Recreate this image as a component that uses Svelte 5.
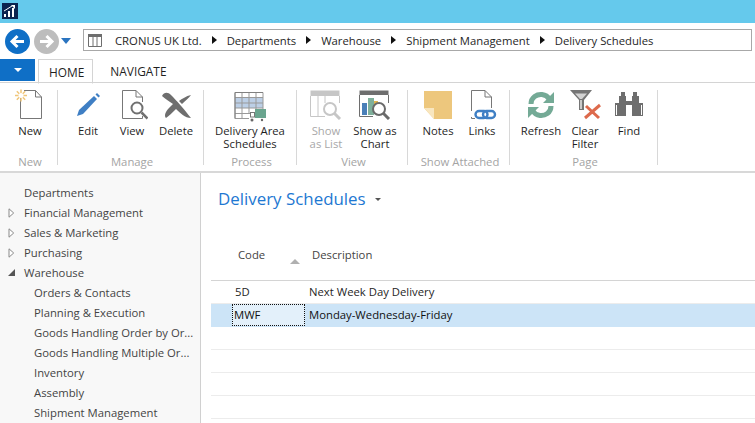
<script lang="ts">
	const crumbs = ['CRONUS UK Ltd.', 'Departments', 'Warehouse', 'Shipment Management', 'Delivery Schedules'];

	const groups = [
		{ label: 'New', width: 58, pad: 12, items: [{ id: 'new', text: 'New', w: 36 }] },
		{
			label: 'Manage',
			width: 146,
			pad: 8,
			items: [
				{ id: 'edit', text: 'Edit', w: 44 },
				{ id: 'view', text: 'View', w: 44 },
				{ id: 'delete', text: 'Delete', w: 44 }
			]
		},
		{ label: 'Process', width: 93, pad: 4, items: [{ id: 'area', text: 'Delivery Area\nSchedules', w: 84 }] },
		{
			label: 'View',
			width: 111,
			pad: 8,
			items: [
				{ id: 'list', text: 'Show\nas List', w: 42, off: true },
				{ id: 'chart', text: 'Show as\nChart', w: 56 }
			]
		},
		{
			label: 'Show Attached',
			width: 102,
			pad: 8,
			items: [
				{ id: 'notes', text: 'Notes', w: 44 },
				{ id: 'links', text: 'Links', w: 44 }
			]
		},
		{
			label: 'Page',
			width: 148,
			pad: 9,
			items: [
				{ id: 'refresh', text: 'Refresh', w: 44 },
				{ id: 'clear', text: 'Clear\nFilter', w: 44 },
				{ id: 'find', text: 'Find', w: 44 }
			]
		}
	];

	const nav = [
		{ text: 'Departments', level: 0 },
		{ text: 'Financial Management', level: 0, arrow: 'closed' },
		{ text: 'Sales & Marketing', level: 0, arrow: 'closed' },
		{ text: 'Purchasing', level: 0, arrow: 'closed' },
		{ text: 'Warehouse', level: 0, arrow: 'open' },
		{ text: 'Orders & Contacts', level: 1 },
		{ text: 'Planning & Execution', level: 1 },
		{ text: 'Goods Handling Order by Or...', level: 1 },
		{ text: 'Goods Handling Multiple Or...', level: 1 },
		{ text: 'Inventory', level: 1 },
		{ text: 'Assembly', level: 1 },
		{ text: 'Shipment Management', level: 1 }
	];
</script>

<div class="window">
	<div class="titlebar">
		<svg class="app-icon" width="16" height="16" viewBox="0 0 16 16">
			<rect width="16" height="16" fill="#0b2350" />
			<path d="M2 14v-3h2v3zM6 14V8h2v6zM10 14V5h2v9z" fill="#fff" />
			<path d="M2 8 L10 3" stroke="#fff" stroke-width="1" fill="none" />
			<path d="M9 2h4v4z" fill="#fff" />
		</svg>
	</div>

	<div class="addressrow">
		<span class="nav-btn back">
			<svg width="25" height="25" viewBox="0 0 25 25">
				<circle cx="12.5" cy="12.5" r="12.5" fill="#0f6fc6" />
				<path d="M19 12.5H8M12.500 7l-5.500 5.500 5.500 5.500" stroke="#fff" stroke-width="3" fill="none" />
			</svg>
		</span>
		<span class="nav-btn">
			<svg width="25" height="25" viewBox="0 0 25 25">
				<circle cx="12.500" cy="12.500" r="12.500" fill="#bdbdbd" />
				<path d="M6 12.500H17M12.500 7l5.500 5.500-5.500 5.500" stroke="#fff" stroke-width="3" fill="none" />
			</svg>
		</span>
		<span class="history-caret"></span>
		<div class="address">
			<svg class="grid-icon" width="14" height="13" viewBox="0 0 14 13">
				<path d="M.5 .5h13v12H.5zM5 .5v12M9 .5v12" stroke="#6e6e6e" fill="none" />
				<path d="M0 0h14v3H0z" fill="#6e6e6e" />
			</svg>
			{#each crumbs as crumb, i}
				{#if i > 0}<span class="crumb-sep"></span>{/if}
				<span class="crumb">{crumb}</span>
			{/each}
		</div>
	</div>

	<div class="tabrow">
		<span class="app-menu"><span class="app-menu-caret"></span></span>
		<span class="tab active">HOME</span>
		<span class="tab">NAVIGATE</span>
	</div>

	<div class="ribbon">
		{#each groups as group}
			<section class="group" style="width: {group.width}px; padding-left: {group.pad}px">
				<div class="items">
					{#each group.items as item}
						<div class="item" class:off={item.off} style="width: {item.w}px">
							<div class="icon">
								{#if item.id === 'new'}
									<svg width="32" height="32" viewBox="0 0 32 32">
										<path d="M6.500 9V30.500H27.500V9L21.500 2.500H10" fill="#fff" stroke="#777" />
										<path d="M21.500 2.500V9H27.500" fill="none" stroke="#777" />
										<path d="M1 7.500H13M7 1.500V13.500M2.800 3.300 11.200 11.700M11.200 3.300 2.800 11.700" stroke="#f0c67a" stroke-width="1.500" />
										<circle cx="7" cy="7.500" r="2.500" fill="#fff" />
									</svg>
								{:else if item.id === 'edit'}
									<svg width="32" height="32" viewBox="0 0 32 32">
										<path d="M22 8 25 11 11 26 5 28 7 22z" fill="#3f7fc4" />
										<path d="M23.500 6.500 25 5 28 8 26.500 9.500z" fill="#3f7fc4" />
									</svg>
								{:else if item.id === 'view'}
									<svg width="32" height="32" viewBox="0 0 32 32">
										<path d="M6.500 30.500V2.500H20L26.500 9V14M26.500 28V30.500H6.500" fill="none" stroke="#777" />
										<path d="M20 2.500V9H26.500" fill="none" stroke="#777" />
										<circle cx="21" cy="20" r="5.500" fill="#fff" stroke="#707070" stroke-width="2" />
										<path d="M25.500 24.500 31.500 30.500" stroke="#707070" stroke-width="2.500" />
									</svg>
								{:else if item.id === 'delete'}
									<svg width="32" height="32" viewBox="0 0 32 32">
										<path d="M2 8C4 4 8 4 11 7 16 12 24 21 31 30 25 30 20 25 16 21 12 25 9 28 6 30 4 28 5 24 9 20L13 16C9 13 5 11 2 8zM19 13C22 11 26 8 31 7 29 10 25 13 22 16z" fill="#6e6e6e" />
									</svg>
								{:else if item.id === 'area'}
									<svg width="36" height="34" viewBox="0 0 36 34">
										<path d="M3 9.500H31V20H3z" fill="#bccfe6" />
										<path d="M3 4.500H31V21M3 4.500V30.500H17M3 9.500H31M3 15H31M3 20H31M3 25.500H20M10 4.500V30M17 4.500V26M24 4.500V21" stroke="#999" fill="none" />
										<path d="M3 4.500H31M3 4.500V30.500" stroke="#808080" fill="none" />
										<rect x="23" y="21" width="11" height="9" fill="#6aa58f" />
										<rect x="18.500" y="24.500" width="4" height="4.500" fill="#fff" stroke="#777" />
										<circle cx="20" cy="32" r="1.500" fill="#666" />
										<circle cx="30" cy="32" r="1.200" fill="#666" />
									</svg>
								{:else if item.id === 'list'}
									<svg width="32" height="32" viewBox="0 0 32 32">
										<path d="M.5 2.500H29.500V8H.5z" fill="#c6c6c6" />
										<path d="M.5 8V28.500H15M29.500 8V15M8 8V28M15 8V15" stroke="#c6c6c6" fill="none" />
										<circle cx="20" cy="21" r="6" fill="#fff" stroke="#c6c6c6" stroke-width="2" />
										<path d="M24.500 25.500 30 31" stroke="#c6c6c6" stroke-width="3" />
									</svg>
								{:else if item.id === 'chart'}
									<svg width="32" height="32" viewBox="0 0 32 32">
										<path d="M.5 2.500H29.500V7H.5z" fill="#6e6e6e" />
										<path d="M.5 7V28.500H14M29.500 7V15" stroke="#6e6e6e" fill="none" />
										<rect x="3" y="15" width="5" height="12" fill="#4a7fb8" />
										<rect x="9" y="10" width="6" height="17" fill="#7fb09b" />
										<rect x="15" y="13" width="4" height="6" fill="#e2b54f" />
										<circle cx="20" cy="21" r="6" fill="#fff" stroke="#6a6a6a" stroke-width="2" />
										<path d="M24.500 25.500 30 31" stroke="#6a6a6a" stroke-width="3" />
									</svg>
								{:else if item.id === 'notes'}
									<svg width="32" height="32" viewBox="0 0 32 32">
										<path d="M2 3H30V31H12L2 20z" fill="#edc77d" />
										<path d="M2 20H12V31z" fill="#f8e6bf" />
									</svg>
								{:else if item.id === 'links'}
									<svg width="32" height="32" viewBox="0 0 32 32">
										<path d="M5.500 23V2.500H19L25.500 9V20M5.500 29V30.500H9" fill="none" stroke="#777" />
										<path d="M19 2.500V9H25.500" fill="none" stroke="#777" />
										<rect x="9.500" y="23" width="12" height="7" rx="3.500" fill="none" stroke="#3f7fc4" stroke-width="2.400" />
										<rect x="17" y="23" width="12" height="7" rx="3.500" fill="none" stroke="#3f7fc4" stroke-width="2.400" />
									</svg>
								{:else if item.id === 'refresh'}
									<svg width="32" height="32" viewBox="0 0 32 32">
										<path d="M6 16C6 9 12 6 17 6.500 21 7 23 9 24 11" stroke="#74aa96" stroke-width="5" fill="none" />
										<path d="M29 4V15H18z" fill="#74aa96" />
										<path d="M26 18C26 25 20 28 15 27.500 11 27 9 25 8 23" stroke="#74aa96" stroke-width="5" fill="none" />
										<path d="M3 30V19H14z" fill="#74aa96" />
									</svg>
								{:else if item.id === 'clear'}
									<svg width="36" height="32" viewBox="0 0 36 32">
										<path d="M3 2H25L17 12V22H12V12z" fill="#757575" />
										<path d="M8 5.500H20L15 11H13z" fill="#d2d2d2" />
										<path d="M14 12V21" stroke="#e8e8e8" stroke-width="1.500" />
										<path d="M18 30 33 17M19 18 32 30" stroke="#dd6a4c" stroke-width="3" fill="none" />
									</svg>
								{:else if item.id === 'find'}
									<svg width="36" height="32" viewBox="0 0 36 32">
										<path d="M10 4H14V8H15V13H21V8H22V4H26V8H28V15H32V28H21V17H15V28H4V15H8V8H10z" fill="#6e6e6e" />
										<path d="M5.500 17V27M30.500 17V27" stroke="#fff" stroke-width="1" />
									</svg>
								{/if}
							</div>
							<div class="item-label">{item.text}</div>
						</div>
					{/each}
				</div>
				<div class="group-label">{group.label}</div>
			</section>
		{/each}
	</div>

	<div class="main">
		<nav class="sidebar">
			{#each nav as entry}
				<div class="nav-row" class:sub={entry.level === 1}>
					{#if entry.arrow === 'closed'}
						<svg class="arrow" width="7" height="10" viewBox="0 0 7 10"><path d="M1 .8 5.700 5 1 9.200z" fill="#fff" stroke="#8a8a8a" /></svg>
					{:else if entry.arrow === 'open'}
						<svg class="arrow" width="7" height="10" viewBox="0 0 7 10"><path d="M0 8H7V1z" fill="#555" /></svg>
					{/if}
					<span class="nav-text">{entry.text}</span>
				</div>
			{/each}
		</nav>

		<div class="content">
			<h1 class="page-title">Delivery Schedules <span class="title-caret"></span></h1>
			<div class="grid-head">
				<span class="col-code">Code<span class="sort"></span></span>
				<span class="col-desc">Description</span>
			</div>
			<div class="row">
				<span class="cell-code">5D</span>
				<span class="cell-desc">Next Week Day Delivery</span>
			</div>
			<div class="row selected">
				<span class="cell-code focus">MWF</span>
				<span class="cell-desc">Monday-Wednesday-Friday</span>
			</div>
			<div class="row"></div>
			<div class="row"></div>
			<div class="row"></div>
			<div class="row"></div>
		</div>
	</div>
</div>

<style>
	:global(body) {
		margin: 0;
		overflow: hidden;
		background: #fff;
	}

	.window {
		width: 755px;
		height: 423px;
		overflow: hidden;
		display: flex;
		flex-direction: column;
		font-family: 'Open Sans', 'Noto Sans', sans-serif;
		font-size: 11.3px;
		color: #1f1f1f;
	}

	.titlebar {
		height: 23px;
		flex: none;
		background: #65c9ec;
		display: flex;
		align-items: flex-start;
	}

	.app-icon {
		margin: 3px 0 0 2px;
	}

	.addressrow {
		height: 36px;
		flex: none;
		display: flex;
		align-items: center;
		padding-left: 5px;
	}

	.nav-btn {
		display: block;
		height: 25px;
		margin-right: 4px;
	}

	.history-caret {
		width: 0;
		height: 0;
		margin: 0 12px 0 -2px;
		border-left: 5px solid transparent;
		border-right: 5px solid transparent;
		border-top: 6px solid #2a74c0;
	}

	.address {
		flex: 1;
		height: 22px;
		margin: 0 3px 2px 0;
		border: 1px solid #a8a8a8;
		display: flex;
		align-items: center;
		padding-left: 4px;
		box-sizing: border-box;
	}

	.grid-icon {
		margin-right: 13px;
	}

	.crumb {
		white-space: nowrap;
	}

	.crumb-sep {
		width: 0;
		height: 0;
		margin: 0 10px;
		border-left: 5px solid #111;
		border-top: 4px solid transparent;
		border-bottom: 4px solid transparent;
	}

	.tabrow {
		height: 24px;
		flex: none;
		display: flex;
		box-sizing: border-box;
		border-bottom: 1px solid #d4d4d4;
	}

	.app-menu {
		width: 35px;
		height: 22px;
		background: #0f6fc6;
		display: flex;
		align-items: center;
		justify-content: center;
	}

	.app-menu-caret {
		width: 0;
		height: 0;
		border-left: 4px solid transparent;
		border-right: 4px solid transparent;
		border-top: 4px solid #fff;
	}

	.tab {
		padding: 0 15px 0 17px;
		line-height: 25px;
		height: 23px;
		font-size: 11.9px;
	}

	.tab.active {
		margin-left: 3px;
		padding: 0 8px 0 10px;
		border: 1px solid #d4d4d4;
		border-bottom: 1px solid #fff;
		line-height: 25px;
		height: 23px;
		margin-top: 0;
	}

	.ribbon {
		height: 90px;
		flex: none;
		display: flex;
		box-sizing: border-box;
		border-bottom: 2px solid #d8d8d8;
		padding-top: 7px;
	}

	.group {
		flex: none;
		height: 75px;
		border-right: 1px solid #d8d8d8;
		position: relative;
		box-sizing: border-box;
		display: flex;
		flex-direction: column;
	}

	.items {
		display: flex;
		flex: 1;
		margin-top: -2px;
	}

	.item {
		display: flex;
		flex-direction: column;
		align-items: center;
		text-align: center;
		line-height: 13px;
		white-space: nowrap;
	}

	.item.off {
		color: #a8a8a8;
	}

	.icon {
		height: 35px;
		margin-bottom: 1px;
		display: flex;
		justify-content: center;
	}

	.icon svg {
		flex: none;
		display: block;
	}

	.item-label {
		white-space: pre-line;
	}

	.group-label {
		position: absolute;
		left: 3px;
		right: 0;
		bottom: -5px;
		text-align: center;
		color: #a4a4a4;
		line-height: 16px;
	}

	.main {
		flex: 1;
		display: flex;
		min-height: 0;
	}

	.sidebar {
		width: 201px;
		flex: none;
		box-sizing: border-box;
		background: #f8f8f8;
		border-right: 1px solid #d0d0d0;
		padding-top: 10px;
		color: #444;
	}

	.nav-row {
		height: 20px;
		line-height: 19px;
		padding-left: 24px;
		position: relative;
		white-space: nowrap;
	}

	.nav-row.sub {
		padding-left: 34px;
	}

	.nav-text {
		display: block;
	}

	.arrow {
		position: absolute;
		left: 8px;
		top: 5px;
	}

	.content {
		flex: 1;
		padding-left: 10px;
		min-width: 0;
	}

	.page-title {
		margin: 15px 0 0 7px;
		font-size: 16.9px;
		font-weight: 400;
		line-height: 22px;
		color: #1e78d2;
	}

	.title-caret {
		display: inline-block;
		width: 0;
		height: 0;
		margin: 0 0 4px 5px;
		border-left: 3px solid transparent;
		border-right: 3px solid transparent;
		border-top: 3px solid #555;
	}

	.grid-head {
		height: 41px;
		margin-top: 30px;
		display: flex;
		box-sizing: border-box;
		border-bottom: 1px solid #d4d4d4;
		color: #444;
		padding-top: 7px;
	}

	.col-code {
		padding-left: 27px;
		position: relative;
		flex: none;
		box-sizing: border-box;
		width: 101px;
	}

	.sort {
		position: absolute;
		left: 79px;
		top: 12px;
		width: 0;
		height: 0;
		border-left: 5px solid transparent;
		border-right: 5px solid transparent;
		border-bottom: 5px solid #b0b0b0;
	}

	.row {
		height: 23px;
		box-sizing: border-box;
		border-bottom: 1px solid #ececec;
		display: flex;
		align-items: center;
		line-height: 20px;
	}

	.row.selected {
		background: #cce4f7;
		border-bottom: none;
		padding-bottom: 1px;
		color: #111;
	}

	.cell-code {
		margin-left: 21px;
		width: 73px;
		height: 22px;
		line-height: 21px;
		padding-left: 3px;
		box-sizing: border-box;
		flex: none;
	}

	.cell-code.focus {
		background: #e3f0fa;
		outline: 1px dotted #111;
		outline-offset: -1px;
		padding-left: 2px;
	}

	.cell-desc {
		padding-left: 4px;
	}
</style>
